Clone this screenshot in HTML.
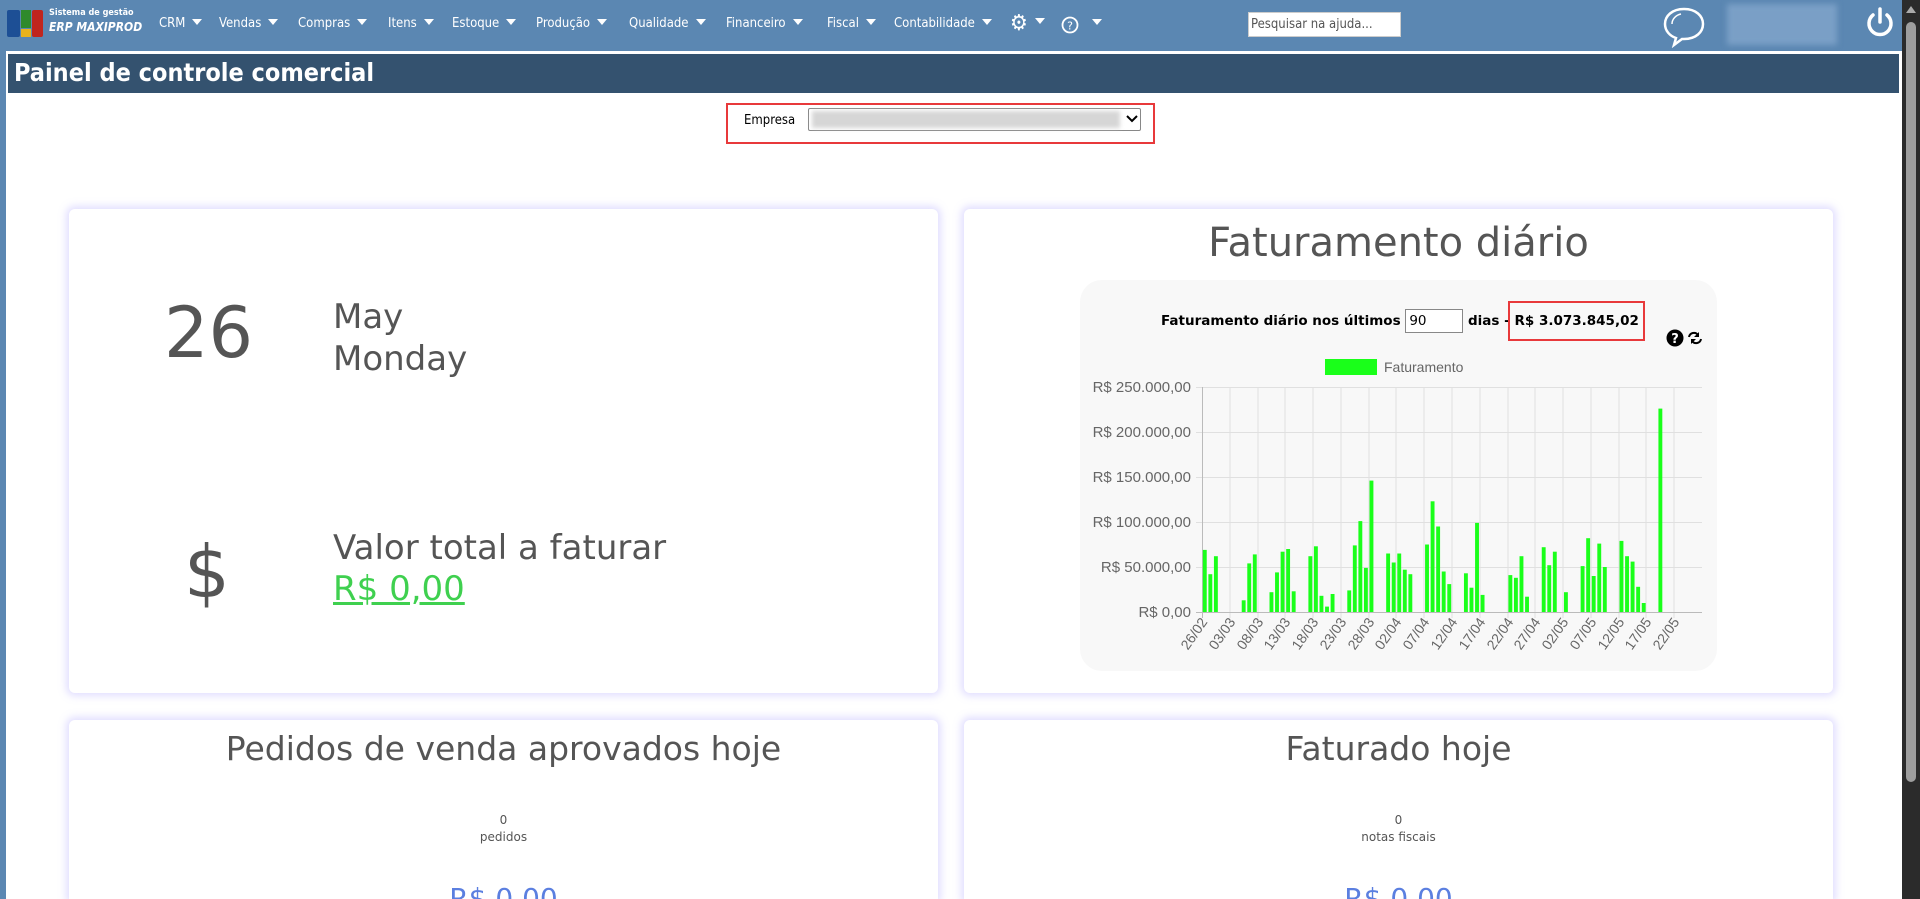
<!DOCTYPE html>
<html style="overflow:hidden;width:1920px;height:899px"><head><meta charset="utf-8">
<style>
*{margin:0;padding:0;box-sizing:border-box}
body{width:1920px;height:899px;overflow:hidden;background:#5b87b2;font-family:"DejaVu Sans","Liberation Sans",sans-serif;position:relative}
.a{position:absolute}
.nav{color:#fff;font-size:13px;top:16px;font-family:"DejaVu Sans Condensed","DejaVu Sans",sans-serif}
.car{display:inline-block;width:0;height:0;border-left:5px solid transparent;border-right:5px solid transparent;border-top:6px solid #fff;margin-left:7px;vertical-align:2px}
.page{left:6px;top:51px;width:1896px;height:848px;background:#fff}
.card{background:#fff;border-radius:6px;box-shadow:0 0 8px 3px rgba(170,160,255,.35)}
.c{color:#555}
</style></head><body>
<!-- logo -->
<div class="a" style="left:7px;top:10px;width:13px;height:27px;background:#1d4f95;border-radius:2px"></div>
<div class="a" style="left:21px;top:10px;width:10px;height:18px;background:#2f8a2c"></div>
<div class="a" style="left:21px;top:29px;width:10px;height:8px;background:#e8b21c"></div>
<div class="a" style="left:32px;top:10px;width:11px;height:27px;background:#c0251e;border-radius:2px"></div>
<div class="a" style="left:49px;top:8px;color:#fff;font-size:9px;font-weight:bold;font-family:'DejaVu Sans Condensed',sans-serif">Sistema de gestão</div>
<div class="a" style="left:49px;top:20px;color:#fff;font-size:12px;font-weight:bold;font-style:italic;font-family:'DejaVu Sans Condensed',sans-serif">ERP MAXIPROD</div>
<div class="a nav" style="left:159px">CRM<span class="car"></span></div>
<div class="a nav" style="left:219px">Vendas<span class="car"></span></div>
<div class="a nav" style="left:298px">Compras<span class="car"></span></div>
<div class="a nav" style="left:388px">Itens<span class="car"></span></div>
<div class="a nav" style="left:452px">Estoque<span class="car"></span></div>
<div class="a nav" style="left:536px">Produção<span class="car"></span></div>
<div class="a nav" style="left:629px">Qualidade<span class="car"></span></div>
<div class="a nav" style="left:726px">Financeiro<span class="car"></span></div>
<div class="a nav" style="left:827px">Fiscal<span class="car"></span></div>
<div class="a nav" style="left:894px">Contabilidade<span class="car"></span></div>
<div class="a nav" style="left:1010px;top:11px;font-size:22px">⚙<span class="car" style="vertical-align:6px"></span></div>
<svg class="a" style="left:1061px;top:16px" width="18" height="18" viewBox="0 0 18 18"><circle cx="9" cy="9" r="7.5" fill="none" stroke="#fff" stroke-width="1.8"/><text x="9" y="13.5" fill="#fff" font-size="11" text-anchor="middle" font-family="DejaVu Sans">?</text></svg>
<div class="a nav" style="left:1085px"><span class="car"></span></div>
<div class="a" style="left:1248px;top:12px;width:153px;height:25px;background:#fff;border:1px solid #ccc;font-size:13px;color:#555;padding:4px 2px;font-family:'DejaVu Sans Condensed',sans-serif">Pesquisar na ajuda...</div>
<svg class="a" style="left:1660px;top:6px" width="48" height="42" viewBox="0 0 48 42"><path d="M24 3C12 3 5 10 5 18c0 7 5 12 11 14l-2 7 8-6c1 0 2 0 2 0 12 0 19-7 19-15S36 3 24 3z" fill="none" stroke="#fff" stroke-width="2.5"/><path d="M12 18c0-5 4-9 9-10" fill="none" stroke="#fff" stroke-width="1.5"/></svg>
<div class="a" style="left:1727px;top:4px;width:110px;height:41px;background:#7a9fc6;filter:blur(3px)"></div>
<svg class="a" style="left:1864px;top:6px" width="32" height="34" viewBox="0 0 32 34"><path d="M9 9A11 11 0 1 0 23 9" fill="none" stroke="#fff" stroke-width="3.5" stroke-linecap="round"/><line x1="16" y1="3" x2="16" y2="16" stroke="#fff" stroke-width="3.5" stroke-linecap="round"/></svg>
<!-- scrollbar -->
<div class="a" style="left:1902px;top:0;width:18px;height:899px;background:#2b2b2b"></div>
<div class="a" style="left:1906px;top:22px;width:10px;height:760px;background:#9e9e9e;border-radius:5px"></div>
<div class="a" style="left:1906px;top:6px;width:0;height:0;border-left:5px solid transparent;border-right:5px solid transparent;border-bottom:7px solid #aaa"></div>
<!-- page -->
<div class="a page"></div>
<div class="a" style="left:8px;top:54px;width:1891px;height:39px;background:#34526f;color:#fff;font-weight:bold;font-size:25px;padding:4px 6px;font-family:'DejaVu Sans Condensed',sans-serif">Painel de controle comercial</div>
<div class="a" style="left:726px;top:103px;width:429px;height:41px;border:2px solid #e8393b"></div>
<div class="a" style="left:744px;top:113px;font-size:13px;color:#000;font-family:'DejaVu Sans Condensed',sans-serif">Empresa</div>
<div class="a" style="left:808px;top:108px;width:333px;height:23px;border:1px solid #888;background:#fff;border-radius:2px"></div>
<div class="a" style="left:812px;top:111px;width:308px;height:17px;background:#d6d6d6;filter:blur(2px)"></div>
<svg class="a" style="left:1126px;top:114px" width="12" height="10"><path d="M1 2l5 5 5-5" stroke="#000" stroke-width="2" fill="none"/></svg>
<!-- cards -->
<div class="a card" style="left:69px;top:209px;width:869px;height:484px"></div>
<div class="a card" style="left:964px;top:209px;width:869px;height:484px"></div>
<div class="a card" style="left:69px;top:720px;width:869px;height:179px;border-radius:6px 6px 0 0"></div>
<div class="a card" style="left:964px;top:720px;width:869px;height:179px;border-radius:6px 6px 0 0"></div>
<div class="a c" style="left:164px;top:293px;font-size:70px;line-height:80px">26</div>
<div class="a c" style="left:333px;top:296px;font-size:34px;line-height:42px">May<br>Monday</div>
<div class="a c" style="left:184px;top:532px;font-size:72px;line-height:80px">$</div>
<div class="a c" style="left:333px;top:527px;font-size:34px;line-height:42px">Valor total a faturar</div>
<div class="a" style="left:333px;top:568px;font-size:34px;line-height:42px;color:#3fd04f;text-decoration:underline">R$ 0,00</div>
<div class="a c" style="left:964px;top:220px;width:869px;text-align:center;font-size:40px">Faturamento diário</div>
<div class="a" style="left:1080px;top:280px;width:637px;height:391px;background:#f8f8f8;border-radius:22px"></div>
<div class="a" style="left:1161px;top:301px;font-size:13.5px;font-weight:bold;color:#000;font-family:'DejaVu Sans',sans-serif;white-space:nowrap;line-height:20px">Faturamento diário nos últimos <span style="display:inline-block;width:58px;height:24px;border:1px solid #888;background:#fff;font-weight:normal;vertical-align:middle;padding:2px 3px;line-height:18px">90</span> dias - <span style="display:inline-block;border:2px solid #e8393b;padding:8px 4px;margin-left:-6px">R$ 3.073.845,02</span></div>
<svg class="a" style="left:1666px;top:328px" width="48" height="20"><circle cx="9" cy="10" r="8.5" fill="#000"/><text x="9" y="15" fill="#fff" font-size="13" font-weight="bold" text-anchor="middle" font-family="DejaVu Sans">?</text><path d="M23 9a5 5 0 0 1 9-2M35 11a5 5 0 0 1-9 2" stroke="#000" stroke-width="2" fill="none"/><path d="M33 4v5h-5zM25 16v-5h5z" fill="#000"/></svg>
<svg class="a" style="left:0;top:0" width="1920" height="899">
<rect x="1325" y="359" width="52" height="16" fill="#1aff1a"/>
<text x="1384" y="372" font-size="14" fill="#666" font-family="Liberation Sans">Faturamento</text>
<g font-family="Liberation Sans" font-size="15" fill="#666" text-anchor="end">
<text x="1191" y="392">R$ 250.000,00</text><text x="1191" y="437">R$ 200.000,00</text><text x="1191" y="482">R$ 150.000,00</text><text x="1191" y="527">R$ 100.000,00</text><text x="1191" y="572">R$ 50.000,00</text><text x="1191" y="617">R$ 0,00</text>
</g>
<g stroke="#e0e0e0" stroke-width="1">
<line x1="1196" y1="387.5" x2="1702" y2="387.5"/><line x1="1196" y1="432.5" x2="1702" y2="432.5"/><line x1="1196" y1="477.5" x2="1702" y2="477.5"/><line x1="1196" y1="522.5" x2="1702" y2="522.5"/><line x1="1196" y1="567.5" x2="1702" y2="567.5"/>
<line x1="1230" y1="387" x2="1230" y2="618"/><line x1="1258" y1="387" x2="1258" y2="618"/><line x1="1285" y1="387" x2="1285" y2="618"/><line x1="1313" y1="387" x2="1313" y2="618"/><line x1="1341" y1="387" x2="1341" y2="618"/><line x1="1369" y1="387" x2="1369" y2="618"/><line x1="1396" y1="387" x2="1396" y2="618"/><line x1="1424" y1="387" x2="1424" y2="618"/><line x1="1452" y1="387" x2="1452" y2="618"/><line x1="1480" y1="387" x2="1480" y2="618"/><line x1="1508" y1="387" x2="1508" y2="618"/><line x1="1535" y1="387" x2="1535" y2="618"/><line x1="1563" y1="387" x2="1563" y2="618"/><line x1="1591" y1="387" x2="1591" y2="618"/><line x1="1619" y1="387" x2="1619" y2="618"/><line x1="1646" y1="387" x2="1646" y2="618"/><line x1="1674" y1="387" x2="1674" y2="618"/>
</g>
<line x1="1202.5" y1="387" x2="1202.5" y2="618" stroke="#bbb"/>
<line x1="1196" y1="612.5" x2="1702" y2="612.5" stroke="#bbb"/>
<g transform="translate(1202,612) scale(5.556,-0.9)" fill="#1aff1a">
<rect x="0.15" width="0.7" height="69"/><rect x="1.15" width="0.7" height="42"/><rect x="2.15" width="0.7" height="62"/><rect x="7.15" width="0.7" height="13"/><rect x="8.15" width="0.7" height="54"/><rect x="9.15" width="0.7" height="64"/><rect x="12.15" width="0.7" height="22"/><rect x="13.15" width="0.7" height="44"/><rect x="14.15" width="0.7" height="67"/><rect x="15.15" width="0.7" height="70"/><rect x="16.15" width="0.7" height="23"/><rect x="19.15" width="0.7" height="62"/><rect x="20.15" width="0.7" height="73"/><rect x="21.15" width="0.7" height="18"/><rect x="22.15" width="0.7" height="6"/><rect x="23.15" width="0.7" height="20"/><rect x="26.15" width="0.7" height="24"/><rect x="27.15" width="0.7" height="74"/><rect x="28.15" width="0.7" height="101"/><rect x="29.15" width="0.7" height="49"/><rect x="30.15" width="0.7" height="146"/><rect x="33.15" width="0.7" height="65"/><rect x="34.15" width="0.7" height="55"/><rect x="35.15" width="0.7" height="65"/><rect x="36.15" width="0.7" height="47"/><rect x="37.15" width="0.7" height="42"/><rect x="40.15" width="0.7" height="75"/><rect x="41.15" width="0.7" height="123"/><rect x="42.15" width="0.7" height="95"/><rect x="43.15" width="0.7" height="45"/><rect x="44.15" width="0.7" height="31"/><rect x="47.15" width="0.7" height="43"/><rect x="48.15" width="0.7" height="27"/><rect x="49.15" width="0.7" height="99"/><rect x="50.15" width="0.7" height="19"/><rect x="55.15" width="0.7" height="41"/><rect x="56.15" width="0.7" height="38"/><rect x="57.15" width="0.7" height="62"/><rect x="58.15" width="0.7" height="17"/><rect x="61.15" width="0.7" height="72"/><rect x="62.15" width="0.7" height="52"/><rect x="63.15" width="0.7" height="67"/><rect x="65.15" width="0.7" height="22"/><rect x="68.15" width="0.7" height="51"/><rect x="69.15" width="0.7" height="82"/><rect x="70.15" width="0.7" height="40"/><rect x="71.15" width="0.7" height="76"/><rect x="72.15" width="0.7" height="50"/><rect x="75.15" width="0.7" height="79"/><rect x="76.15" width="0.7" height="62"/><rect x="77.15" width="0.7" height="56"/><rect x="78.15" width="0.7" height="28"/><rect x="79.15" width="0.7" height="10"/><rect x="82.15" width="0.7" height="226"/>
</g>
<g font-family="Liberation Sans" font-size="14" fill="#666" text-anchor="end">
<text transform="translate(1208,622) rotate(-55)">26/02</text><text transform="translate(1236,622) rotate(-55)">03/03</text><text transform="translate(1264,622) rotate(-55)">08/03</text><text transform="translate(1291,622) rotate(-55)">13/03</text><text transform="translate(1319,622) rotate(-55)">18/03</text><text transform="translate(1347,622) rotate(-55)">23/03</text><text transform="translate(1375,622) rotate(-55)">28/03</text><text transform="translate(1402,622) rotate(-55)">02/04</text><text transform="translate(1430,622) rotate(-55)">07/04</text><text transform="translate(1458,622) rotate(-55)">12/04</text><text transform="translate(1486,622) rotate(-55)">17/04</text><text transform="translate(1514,622) rotate(-55)">22/04</text><text transform="translate(1541,622) rotate(-55)">27/04</text><text transform="translate(1569,622) rotate(-55)">02/05</text><text transform="translate(1597,622) rotate(-55)">07/05</text><text transform="translate(1625,622) rotate(-55)">12/05</text><text transform="translate(1652,622) rotate(-55)">17/05</text><text transform="translate(1680,622) rotate(-55)">22/05</text>
</g>
</svg>
<!-- bottom cards -->
<div class="a c" style="left:69px;top:729px;width:869px;text-align:center;font-size:33px">Pedidos de venda aprovados hoje</div>
<div class="a c" style="left:69px;top:812px;width:869px;text-align:center;font-size:12px;line-height:17px">0<br>pedidos</div>
<div class="a" style="left:69px;top:882px;width:869px;text-align:center;font-size:28px;color:#5b7fe0">R$ 0,00</div>
<div class="a c" style="left:964px;top:729px;width:869px;text-align:center;font-size:33px">Faturado hoje</div>
<div class="a c" style="left:964px;top:812px;width:869px;text-align:center;font-size:12px;line-height:17px">0<br>notas fiscais</div>
<div class="a" style="left:964px;top:882px;width:869px;text-align:center;font-size:28px;color:#5b7fe0">R$ 0,00</div>
</body></html>
